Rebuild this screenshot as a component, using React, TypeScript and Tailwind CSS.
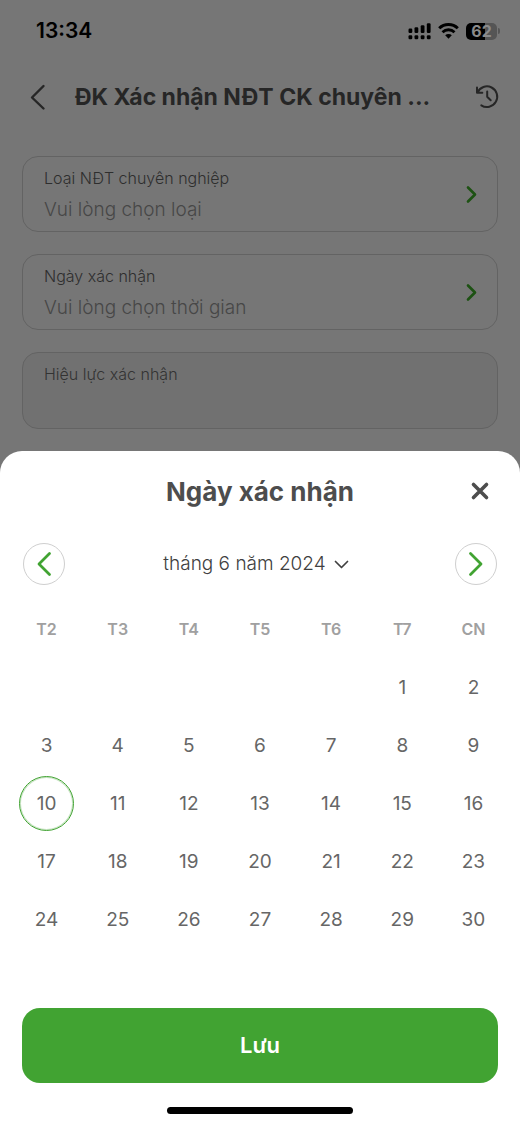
import { useState } from "react";
import type { ReactNode } from "react";
import { clsx } from "clsx";

const WEEKDAYS = ["T2", "T3", "T4", "T5", "T6", "T7", "CN"];
const DAYS_IN_MONTH = 30;
// June 2024 starts on a Saturday
const LEADING_BLANKS = 5;

function buildWeeks() {
  const cells: (number | null)[] = [
    ...Array.from({ length: LEADING_BLANKS }, () => null),
    ...Array.from({ length: DAYS_IN_MONTH }, (_, i) => i + 1),
  ];
  const weeks: (number | null)[][] = [];
  for (let i = 0; i < cells.length; i += 7) {
    weeks.push(cells.slice(i, i + 7));
  }
  return weeks;
}

export default function App() {
  const [selected, setSelected] = useState(10);

  return (
    <div className="flex min-h-screen flex-col bg-[#767676] font-[Inter,'Noto_Sans',sans-serif]">
      <StatusBar />

      {/* Screen header */}
      <header className="flex h-[70px] items-center px-5">
        <button aria-label="Quay lại" className="flex size-9 items-center justify-center">
          <Stroke className="h-6 w-4 text-[#262626]" viewBox="0 0 16 24" d="M13.500 1 2 12.500l11.500 11" />
        </button>
        <h1 className="flex-1 truncate px-[19px] text-[23px] font-bold text-[#262626]">
          ĐK Xác nhận NĐT CK chuyên ...
        </h1>
        <button aria-label="Lịch sử" className="flex size-6 items-center justify-center">
          <HistoryIcon />
        </button>
      </header>

      <main className="flex flex-col gap-[22px] px-[22px] pt-6 pb-[22px]">
        <PickerField label="Loại NĐT chuyên nghiệp" placeholder="Vui lòng chọn loại" />
        <PickerField label="Ngày xác nhận" placeholder="Vui lòng chọn thời gian" />
        <div className="flex h-[77px] flex-col rounded-2xl border border-[#636363] bg-[#717171] px-[21px] pt-[9px]">
          <label htmlFor="validity" className="text-base font-light text-[#333333]">
            Hiệu lực xác nhận
          </label>
          <input id="validity" readOnly className="w-full flex-1 outline-none" />
        </div>
      </main>

      {/* Date picker sheet */}
      <section
        role="dialog"
        aria-labelledby="sheet-title"
        className="flex flex-1 flex-col rounded-t-[22px] bg-white"
      >
        <div className="grid h-20 grid-cols-[1fr_auto_1fr] items-center px-[22px]">
          <h2 id="sheet-title" className="col-start-2 text-[26px] font-bold text-[#4d4d4d]">
            Ngày xác nhận
          </h2>
          <button aria-label="Đóng" className="flex size-9 items-center justify-center justify-self-end">
            <Stroke
              className="size-[18px] text-[#4d4d4d]"
              viewBox="0 0 18 18"
              width={3.6}
              d="M2.500 2.500l13 13M15.500 2.500l-13 13"
            />
          </button>
        </div>

        <div className="flex items-center justify-between px-[23px] pt-3">
          <RoundButton label="Tháng trước">
            <Stroke className="h-6 w-4" viewBox="0 0 16 24" width={2.8} d="M13.500 1.500 3 12l10.500 10.500" />
          </RoundButton>
          <button className="flex items-center gap-2 pt-px pr-2 text-[19px] font-light text-[#404040]">
            tháng 6 năm 2024
            <Stroke className="h-[9px] w-[15px]" viewBox="0 0 15 9" width={1.7} d="m1.500 1.500 6 6 6-6" />
          </button>
          <RoundButton label="Tháng sau">
            <Stroke className="h-6 w-4" viewBox="0 0 16 24" width={2.8} d="M2.500 1.500 13 12 2.500 22.500" />
          </RoundButton>
        </div>

        <div className="px-[11px] pt-[15px]">
          <table className="w-full table-fixed text-center">
            <thead>
              <tr className="h-[58px]">
                {WEEKDAYS.map((day) => (
                  <th key={day} scope="col" className="text-base font-semibold text-[#a0a0a0]">
                    {day}
                  </th>
                ))}
              </tr>
            </thead>
            <tbody>
              {buildWeeks().map((week, i) => (
                <tr key={i} className="h-[58px]">
                  {week.map((day, j) => (
                    <td key={j} className="p-0">
                      {day !== null && (
                        <button
                          onClick={() => setSelected(day)}
                          className={clsx(
                            "mx-auto flex size-[55px] items-center justify-center rounded-full border pt-[3px] text-[19px] text-[#666666]",
                            day === selected
                              ? "border-[#41a332] ring-1 ring-[#41a332]/30 ring-inset"
                              : "border-transparent",
                          )}
                        >
                          {day}
                        </button>
                      )}
                    </td>
                  ))}
                </tr>
              ))}
            </tbody>
          </table>
        </div>

        <div className="mt-auto flex flex-col px-[22px] pt-8 pb-[11px]">
          <button className="h-[75px] rounded-[18px] bg-[#41a332] text-[22px] font-semibold text-white">
            Lưu
          </button>
          <div className="mx-auto mt-6 h-[7px] w-[186px] rounded-full bg-black" />
        </div>
      </section>
    </div>
  );
}

function StatusBar() {
  return (
    <div className="flex h-[62px] items-center justify-between pr-5 pl-9">
      <span className="text-[21px] font-semibold text-black">13:34</span>
      <div className="flex items-center gap-[7px]">
        <svg viewBox="0 0 23 17" className="h-[17px] w-[23px]" fill="#000">
          <rect x="0.500" y="5.500" width="3.800" height="4.500" rx="1.200" />
          <rect x="6.500" y="4.200" width="3.800" height="5.800" rx="1.200" />
          <rect x="12.700" y="2.200" width="3.800" height="7.800" rx="1.200" />
          <rect x="18.800" y="0.200" width="3.800" height="9.800" rx="1.200" />
          <rect x="0.500" y="12.200" width="3.800" height="4" rx="1.200" />
          <rect x="6.500" y="12.200" width="3.800" height="4" rx="1.200" />
          <rect x="12.700" y="12.200" width="3.800" height="4" rx="1.200" />
          <rect x="18.800" y="12.200" width="3.800" height="4" rx="1.200" />
        </svg>
        <svg viewBox="0 0 21 16" className="h-4 w-[21px]" fill="none" stroke="#000">
          <path d="M1.200 5.300a13.300 13.300 0 0 1 18.600 0" strokeWidth="3" />
          <path d="M4.500 9.200a8.600 8.600 0 0 1 12 0" strokeWidth="2.800" />
          <path d="m10.500 15.800-3.300-3.500a4.700 4.700 0 0 1 6.600 0z" fill="#000" stroke="none" />
        </svg>
        <div className="flex items-center gap-px">
          <div className="flex h-[17px] w-[31px] items-center justify-center rounded-[5px] bg-linear-to-r from-black from-62% to-[#555555] to-62% text-base font-bold text-[#8a8a8a]">
            62
          </div>
          <div className="h-[6px] w-[2px] rounded-r-full bg-[#555555]" />
        </div>
      </div>
    </div>
  );
}

function PickerField({ label, placeholder }: { label: string; placeholder: string }) {
  return (
    <button className="flex h-[76px] items-center justify-between rounded-2xl border border-[#636363] px-[21px] text-left">
      <span className="flex flex-col gap-[6px] pt-[2px]">
        <span className="text-base font-light text-[#2e2e2e]">{label}</span>
        <span className="text-[19px] font-light text-[#474747]">{placeholder}</span>
      </span>
      <Stroke className="h-4 w-3 text-[#1d5213]" viewBox="0 0 12 16" width={2.6} d="m4 1.500 7 7-7 7" />
    </button>
  );
}

function RoundButton({ label, children }: { label: string; children: ReactNode }) {
  return (
    <button
      aria-label={label}
      className="flex size-[42px] items-center justify-center rounded-full border border-[#cfcfcf] text-[#41a332]"
    >
      {children}
    </button>
  );
}

function Stroke({
  d,
  viewBox,
  className,
  width = 2.4,
}: {
  d: string;
  viewBox: string;
  className: string;
  width?: number;
}) {
  return (
    <svg
      viewBox={viewBox}
      className={clsx("overflow-visible", className)}
      fill="none"
      stroke="currentColor"
      strokeWidth={width}
      strokeLinecap="round"
      strokeLinejoin="round"
    >
      <path d={d} />
    </svg>
  );
}

function HistoryIcon() {
  return (
    <Stroke
      className="size-6 text-[#262626]"
      viewBox="0 0 24 24"
      width={2}
      d="M1 2.500v5.300h5.300M1.500 7.500A10.300 10.300 0 1 1 5.300 20.300M11.200 6.500v5.300l3.500 3.500"
    />
  );
}
